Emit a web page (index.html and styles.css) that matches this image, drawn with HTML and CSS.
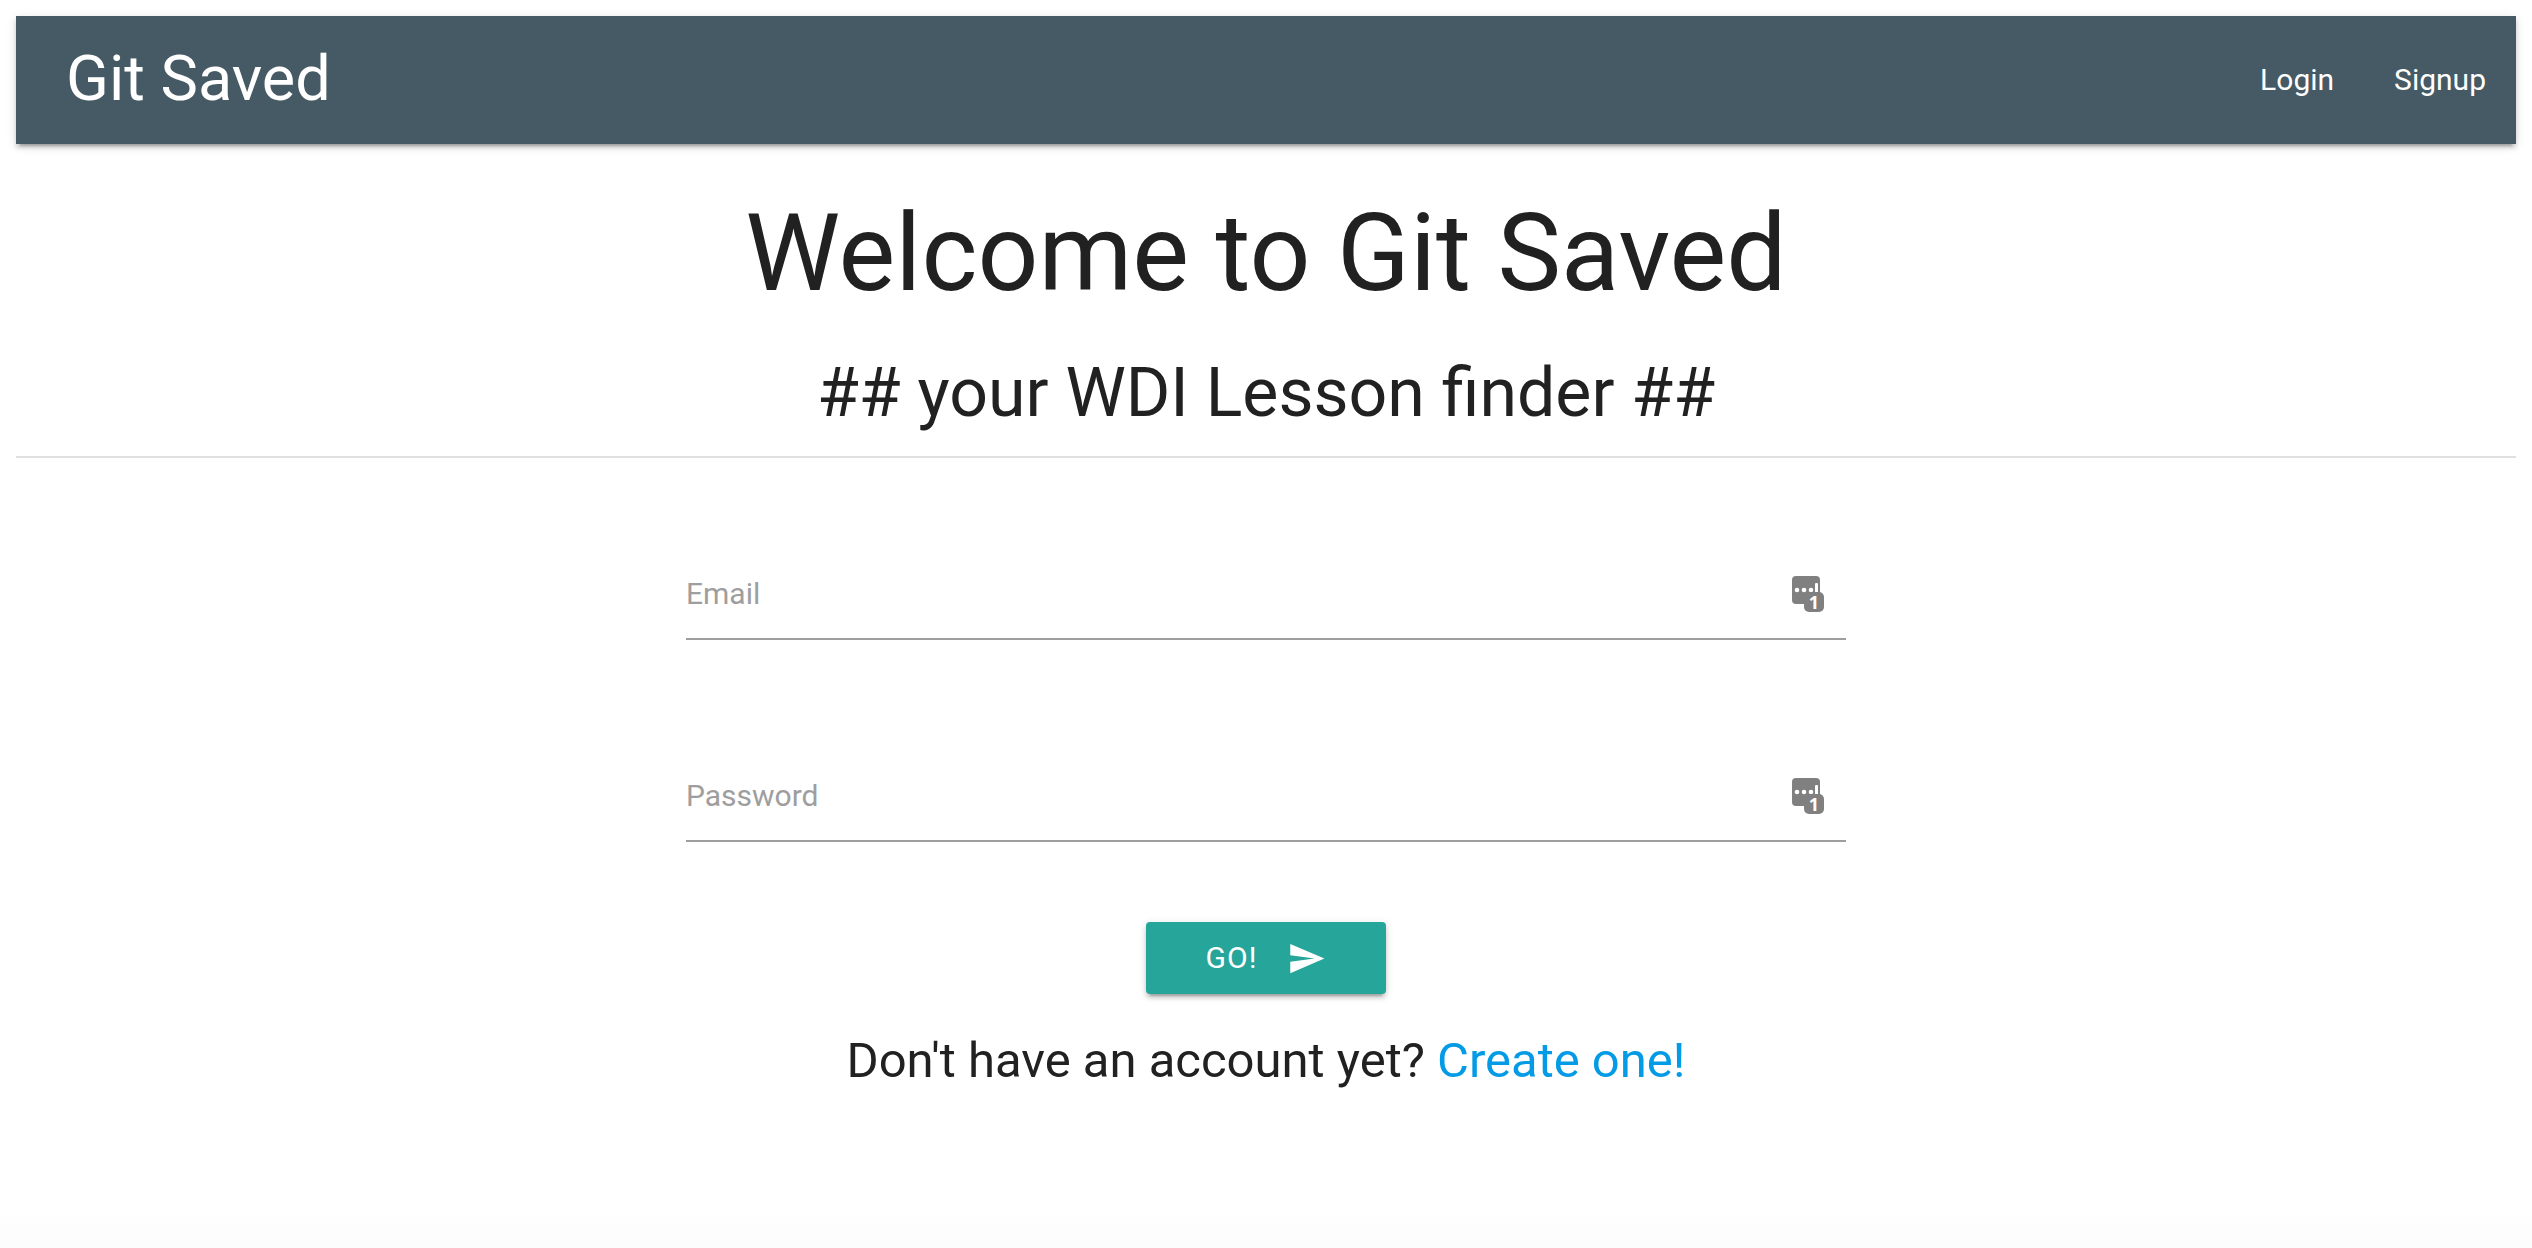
FILE: index.html
```html
<!DOCTYPE html>
<html lang="en">
<head>
  <meta charset="utf-8">
  <meta name="viewport" content="width=device-width, initial-scale=1">
  <title>Git Saved</title>
  <link rel="stylesheet" href="styles.css">
</head>
<body>
  <nav class="navbar">
    <a class="brand" href="#">Git Saved</a>
    <ul class="nav-links">
      <li><a href="#login">Login</a></li>
      <li><a href="#signup">Signup</a></li>
    </ul>
  </nav>
  <header class="intro">
    <h1 class="title">Welcome to Git Saved</h1>
    <h2 class="subtitle">## your WDI Lesson finder ##</h2>
  </header>
  <main class="content">
    <form class="login-form">
      <div class="field">
        <label for="email">Email</label>
        <input id="email" type="email">
        <svg class="field-icon" viewBox="0 0 32 36" aria-hidden="true">
          <rect width="28" height="28" rx="4" fill="#808080"/>
          <circle cx="5" cy="14" r="2.3" fill="#fff"/>
          <circle cx="12" cy="14" r="2.3" fill="#fff"/>
          <circle cx="19" cy="14" r="2.3" fill="#fff"/>
          <rect x="23" y="7" width="3" height="12" rx="1" fill="#fff"/>
          <rect x="12" y="16" width="20" height="20" rx="5" fill="#808080"/>
          <text class="badge" x="22" y="33">1</text>
        </svg>
      </div>
      <div class="field">
        <label for="password">Password</label>
        <input id="password" type="password">
        <svg class="field-icon" viewBox="0 0 32 36" aria-hidden="true">
          <rect width="28" height="28" rx="4" fill="#808080"/>
          <circle cx="5" cy="14" r="2.3" fill="#fff"/>
          <circle cx="12" cy="14" r="2.3" fill="#fff"/>
          <circle cx="19" cy="14" r="2.3" fill="#fff"/>
          <rect x="23" y="7" width="3" height="12" rx="1" fill="#fff"/>
          <rect x="12" y="16" width="20" height="20" rx="5" fill="#808080"/>
          <text class="badge" x="22" y="33">1</text>
        </svg>
      </div>
      <button class="submit" type="submit">
        <span>GO!</span>
        <svg class="send-icon" viewBox="0 0 24 24" aria-hidden="true"><path fill="#fff" d="M2.01 21L23 12 2.01 3 2 10l15 2-15 2z"/></svg>
      </button>
    </form>
    <p class="register">Don't have an account yet? <a href="#signup">Create one!</a></p>
  </main>
</body>
</html>
```
FILE: styles.css
```css
* {
  box-sizing: border-box;
}

body {
  margin: 0;
  padding: 16px;
  min-height: 100vh;
  font-family: Roboto, sans-serif;
  font-size: 30px;
  line-height: 44px;
  color: #212121;
  background: linear-gradient(to top, #fbfbfb, #fff 40px);
}

a {
  color: #039be5;
  text-decoration: none;
}

.navbar {
  display: flex;
  justify-content: space-between;
  padding-left: 50px;
  line-height: 128px;
  background: #455a64;
  box-shadow: 0 4px 4px rgba(0, 0, 0, 0.14), 0 6px 2px -4px rgba(0, 0, 0, 0.2), 0 2px 10px rgba(0, 0, 0, 0.12);
}

.navbar a {
  color: #fff;
}

.brand {
  height: 128px;
  font-size: 63px;
  line-height: 126px;
}

.nav-links {
  display: flex;
  margin: 0;
  padding: 0;
  list-style: none;
}

.nav-links a {
  display: block;
  padding: 0 30px;
}

.intro {
  text-align: center;
  border-bottom: 2px solid #e0e0e0;
}

.title,
.subtitle {
  margin: 0;
  font-weight: 400;
}

.title {
  padding-top: 51px;
  font-size: 107px;
  line-height: 118px;
}

.subtitle {
  padding: 42px 0 25px;
  font-size: 68px;
  line-height: 76px;
}

.content {
  padding-top: 90px;
}

.login-form {
  display: flex;
  flex-direction: column;
  align-items: center;
}

.field {
  display: flex;
  align-items: center;
  width: 46.4%;
  height: 92px;
  margin-bottom: 110px;
  padding: 2px 22px 0 0;
  border-bottom: 2px solid #9e9e9e;
}

.field + .field {
  margin-bottom: 80px;
}

.field label {
  color: #9e9e9e;
}

.field input {
  flex: 1;
  min-width: 0;
  height: 88px;
  border: 0;
  outline: 0;
  background: transparent;
  font: inherit;
}

.field-icon {
  width: 32px;
  height: 36px;
  overflow: visible;
}

.badge {
  font: 700 18px "Open Sans", sans-serif;
  fill: #fff;
  text-anchor: middle;
}

.submit {
  display: flex;
  align-items: center;
  justify-content: center;
  gap: 30px;
  height: 72px;
  padding: 0 60px;
  border: 0;
  border-radius: 4px;
  color: #fff;
  background: #26a69a;
  box-shadow: 0 4px 4px rgba(0, 0, 0, 0.14), 0 6px 2px -4px rgba(0, 0, 0, 0.2), 0 2px 10px rgba(0, 0, 0, 0.12);
  font: inherit;
  letter-spacing: 1px;
}

.send-icon {
  width: 39px;
  height: 39px;
}

.register {
  margin: 40px 0 0;
  font-size: 49px;
  line-height: 54px;
  text-align: center;
}
```
